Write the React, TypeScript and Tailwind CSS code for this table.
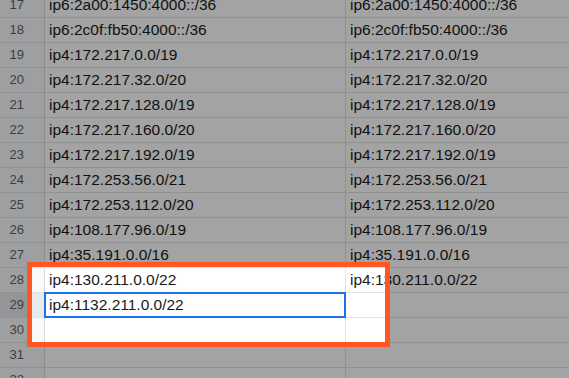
const ROWS: [number, string, string][] = [
  [17, 'ip6:2a00:1450:4000::/36', 'ip6:2a00:1450:4000::/36'],
  [18, 'ip6:2c0f:fb50:4000::/36', 'ip6:2c0f:fb50:4000::/36'],
  [19, 'ip4:172.217.0.0/19', 'ip4:172.217.0.0/19'],
  [20, 'ip4:172.217.32.0/20', 'ip4:172.217.32.0/20'],
  [21, 'ip4:172.217.128.0/19', 'ip4:172.217.128.0/19'],
  [22, 'ip4:172.217.160.0/20', 'ip4:172.217.160.0/20'],
  [23, 'ip4:172.217.192.0/19', 'ip4:172.217.192.0/19'],
  [24, 'ip4:172.253.56.0/21', 'ip4:172.253.56.0/21'],
  [25, 'ip4:172.253.112.0/20', 'ip4:172.253.112.0/20'],
  [26, 'ip4:108.177.96.0/19', 'ip4:108.177.96.0/19'],
  [27, 'ip4:35.191.0.0/16', 'ip4:35.191.0.0/16'],
  [28, 'ip4:130.211.0.0/22', 'ip4:130.211.0.0/22'],
  [29, 'ip4:1132.211.0.0/22', ''],
  [30, '', ''],
  [31, '', ''],
  [32, '', ''],
];

export default function App() {
  return (
    <div className="relative h-[378px] w-[569px] overflow-hidden bg-white font-['Liberation_Sans',Arial,sans-serif]">
      <div className="-mt-[7px] flex flex-col">
        {ROWS.map(([n, a, b]) => (
          <SheetRow key={n} n={n} a={a} b={b} selected={n === 29} />
        ))}
      </div>

      {/* highlight frame: dims everything outside it */}
      <div className="pointer-events-none absolute left-[27px] top-[262px] h-[85px] w-[363px] border-[5px] border-[#ff5722] shadow-[0_0_0_2000px_rgba(0,0,0,0.36)]" />
    </div>
  );
}

function SheetRow({ n, a, b, selected }: { n: number; a: string; b: string; selected: boolean }) {
  return (
    <div className="flex h-[25px] shrink-0 border-b border-[#e2e3e3]">
      <div
        className={`flex w-[45px] shrink-0 items-center justify-end border-r border-[#d8d9da] pr-[20px] text-[13px] text-[#5f6368] ${
          selected ? 'bg-[#e8eaed]' : 'bg-[#f8f9fa]'
        }`}
      >
        {n}
      </div>
      <div className="relative flex w-[301px] shrink-0 items-center border-r border-[#e2e3e3] pl-[4px] text-[15.5px] text-[#1a1a1a]">
        {a}
        {selected && (
          <div className="absolute -left-[1px] -top-[1px] h-[26px] w-[302px] border-2 border-[#1a73e8]" />
        )}
      </div>
      <div className="flex flex-1 items-center pl-[4px] text-[15.5px] text-[#1a1a1a]">{b}</div>
    </div>
  );
}
